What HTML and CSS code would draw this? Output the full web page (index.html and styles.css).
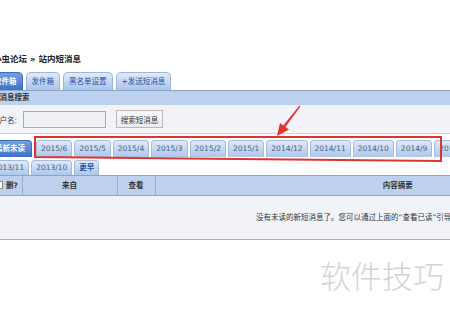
FILE: index.html
```html
<!DOCTYPE html>
<html lang="zh-CN">
<head>
<meta charset="UTF-8">
<title>站内短消息</title>
<link rel="stylesheet" href="styles.css">
</head>
<body>

<div class="page">

  <!-- 位置导航 -->
  <p class="crumb">小虫论坛 » 站内短消息</p>

  <ul class="tabs main-tabs">
    <li class="on">收件箱</li>
    <li>发件箱</li>
    <li>黑名单设置</li>
    <li>+发送短消息</li>
  </ul>

  <!-- 搜索 -->
  <div class="panel">
    <h3>短消息搜索</h3>
    <div class="row">
      <label>用户名:</label>
      <input type="text">
      <button type="button">搜索短消息</button>
    </div>
  </div>

  <!-- 按月份 -->
  <div class="months">
    <ul class="tabs month-tabs">
      <li class="on">最新未读</li>
      <li>2015/6</li>
      <li>2015/5</li>
      <li>2015/4</li>
      <li>2015/3</li>
      <li>2015/2</li>
      <li>2015/1</li>
      <li>2014/12</li>
      <li>2014/11</li>
      <li>2014/10</li>
      <li>2014/9</li>
      <li>2014/8</li>
      <li>2014/7</li>
      <li>2014/6</li>
    </ul>
    <ul class="tabs month-tabs second">
      <li>2013/11</li>
      <li>2013/10</li>
      <li class="more">更早</li>
    </ul>
  </div>

  <table class="list">
    <colgroup>
      <col style="width:34px">
      <col style="width:95px">
      <col style="width:38px">
      <col style="width:485px">
    </colgroup>
    <thead>
      <tr>
        <th class="chk"><span class="box"></span>删?</th>
        <th>来自</th>
        <th>查看</th>
        <th>内容摘要</th>
      </tr>
    </thead>
    <tbody>
      <tr>
        <td class="empty" colspan="4">没有未读的新短消息了。您可以通过上面的“查看已读”引导您查看已读的短消息。</td>
      </tr>
    </tbody>
  </table>

</div>

<div class="watermark">软件技巧</div>

<!-- 标注 -->
<svg class="note" width="450" height="310" viewBox="0 0 450 310">
  <polygon points="35,137 441,137 441,161 35,157" fill="none" stroke="#e2322f" stroke-width="2"/>
  <polygon points="299.5,105.5 300.5,106.5 284.5,128 282.5,126.5" fill="#e2322f"/>
  <polygon points="277,136 280,123 289,129.5" fill="#e2322f"/>
</svg>

</body>
</html>
```

FILE: styles.css
```css
* { margin: 0; padding: 0; box-sizing: border-box; }
html, body { overflow: hidden; background: #fff; }
body {
  position: relative;
  width: 450px;
  height: 310px;
  font-family: "DejaVu Sans", "Noto Sans CJK SC", sans-serif;
  font-size: 7.5px;
  color: #333;
}

.page { width: 680px; margin-left: -12px; }

/* ---------- 导航 ---------- */
.crumb {
  margin: 53px 0 0 5px;
  font-size: 8.5px;
  font-weight: bold;
  line-height: 12px;
  color: #222;
}

/* ---------- 标签 ---------- */
.tabs { display: flex; list-style: none; align-items: flex-end; }
.tabs li { white-space: nowrap; border-bottom: 0; }

.main-tabs { margin-top: 7px; gap: 3px; }
.main-tabs li {
  height: 18px;
  line-height: 17px;
  padding: 0 5px;
  border: 1px solid #9bb6da;
  border-bottom: 0;
  border-radius: 5px 5px 0 0;
  background: linear-gradient(#e2ebf8, #a9c4ea);
  color: #1f51a8;
}
.main-tabs li.on,
.month-tabs li.on {
  background: linear-gradient(#74a0e2, #3d72c6);
  border-color: #3b6dbd;
  color: #fff;
  font-weight: bold;
}

/* ---------- 搜索 ---------- */
.panel { border-top: 1px solid #8aa6c8; border-bottom: 1px solid #cdd5e1; }
.panel h3 {
  background: #bdd1ee;
  height: 14px;
  line-height: 14px;
  padding-left: 4px;
  font-size: 7.5px;
  font-weight: bold;
}
.panel .row {
  background: #f2f3f8;
  height: 28px;
  display: flex;
  align-items: center;
  padding-left: 4px;
}
.panel input {
  width: 83px;
  height: 17px;
  margin-left: 6px;
  border: 1px solid #a5acb5;
  background: #eef0f4;
}
.panel button {
  width: 47px;
  height: 18px;
  margin-left: 10px;
  border: 1px solid #b9b9b9;
  background: linear-gradient(#fafafa, #ececec);
  font-family: inherit;
  font-size: 7.5px;
  color: #333;
}

/* ---------- 月份 ---------- */
.months { margin-top: 6px; }
.month-tabs { gap: 2px; }
.month-tabs li {
  height: 17px;
  line-height: 16px;
  padding: 0 4px;
  border: 1px solid #a4bcdc;
  border-bottom: 0;
  border-radius: 4px 4px 0 0;
  background: linear-gradient(#dfe9f8, #adc7ea);
  color: #4a6185;
}
.month-tabs li.on { padding: 0 6px; margin-right: 2px; }
.month-tabs.second { margin-top: 3px; }
.month-tabs.second li { height: 15px; line-height: 14px; }
.month-tabs li.more { color: #1f51a8; font-weight: bold; }

/* ---------- 列表 ---------- */
.list { width: 652px; border-collapse: collapse; table-layout: fixed; }
.list th {
  background: #bdd1ee;
  height: 20px;
  border-top: 1px solid #8aa6c8;
  border-bottom: 1px solid #8aa6c8;
  border-left: 1px solid #98b0cf;
  font-weight: bold;
  text-align: center;
  line-height: 18px;
}
.list th.chk { text-align: left; padding-left: 7px; border-left: 0; }
.box {
  display: inline-block;
  width: 8px;
  height: 8px;
  margin-right: 3px;
  border: 1px solid #8a8a8a;
  background: #fff;
  vertical-align: -1px;
}
.list td.empty {
  background: #f2f3f8;
  height: 44px;
  padding-left: 268px;
  border-bottom: 1px solid #a0b2ca;
  white-space: nowrap;
  overflow: hidden;
  line-height: 12px;
}

/* ---------- 水印 / 标注 ---------- */
.watermark {
  position: absolute;
  left: 320px;
  top: 259px;
  font-family: "Noto Sans CJK SC", sans-serif;
  font-size: 31px;
  font-weight: 300;
  line-height: 31px;
  color: #d4d4d4;
}
.note { position: absolute; left: 0; top: 0; pointer-events: none; }
```
